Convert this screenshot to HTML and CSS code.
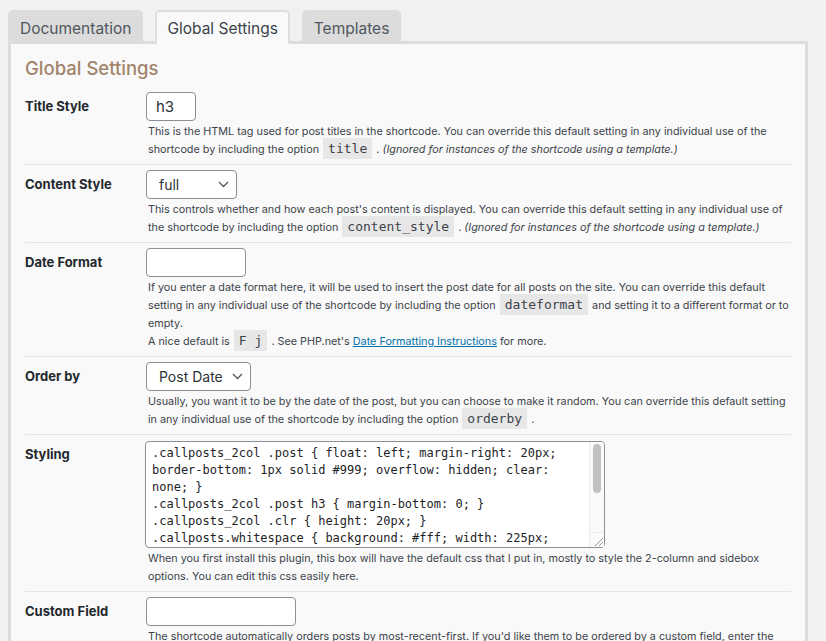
FILE: index.html
```html
<!DOCTYPE html>
<html>
<head>
<meta charset="utf-8">
<link rel="stylesheet" href="styles.css">
</head>
<body>
<div class="wrap">
  <div class="tabs">
    <div class="tab">Documentation</div>
    <div class="tab active">Global Settings</div>
    <div class="tab">Templates</div>
  </div>
  <div class="panel">
    <h2 class="title">Global Settings</h2>

    <div class="row">
      <div class="label">Title Style</div>
      <div class="field">
        <div class="input w-title">h3</div>
        <p class="desc">This is the HTML tag used for post titles in the shortcode. You can override this default setting in any individual use of the shortcode by including the option <code>title</code> . <em>(Ignored for instances of the shortcode using a template.)</em></p>
      </div>
    </div>

    <div class="row">
      <div class="label">Content Style</div>
      <div class="field">
        <div class="select w-content"><span>full</span><svg class="chev" width="11" height="7" viewBox="0 0 11 7"><path d="M1 1l4.5 4.5L10 1" fill="none" stroke="#50575e" stroke-width="1.3"/></svg></div>
        <p class="desc">This controls whether and how each post's content is displayed. You can override this default setting in any individual use of the shortcode by including the option <code>content_style</code> . <em>(Ignored for instances of the shortcode using a template.)</em></p>
      </div>
    </div>

    <div class="row">
      <div class="label">Date Format</div>
      <div class="field">
        <div class="input w-date"></div>
        <p class="desc">If you enter a date format here, it will be used to insert the post date for all posts on the site. You can override this default setting in any individual use of the shortcode by including the option <code>dateformat</code> and setting it to a different format or to empty.<br>A nice default is <code>F j</code> . See PHP.net's <a href="#">Date Formatting Instructions</a> for more.</p>
      </div>
    </div>

    <div class="row">
      <div class="label">Order by</div>
      <div class="field">
        <div class="select w-order"><span>Post Date</span><svg class="chev" width="11" height="7" viewBox="0 0 11 7"><path d="M1 1l4.5 4.5L10 1" fill="none" stroke="#50575e" stroke-width="1.3"/></svg></div>
        <p class="desc">Usually, you want it to be by the date of the post, but you can choose to make it random. You can override this default setting in any individual use of the shortcode by including the option <code>orderby</code> .</p>
      </div>
    </div>

    <div class="row">
      <div class="label">Styling</div>
      <div class="field">
        <div class="ta-wrap">
          <textarea class="code-area" spellcheck="false">.callposts_2col .post { float: left; margin-right: 20px; border-bottom: 1px solid #999; overflow: hidden; clear: none; }
.callposts_2col .post h3 { margin-bottom: 0; }
.callposts_2col .clr { height: 20px; }
.callposts.whitespace { background: #fff; width: 225px; padding: 10px; }
.callposts.whitespace .post { margin-bottom: 10px; }
.callposts.whitespace h3 { font-size: 14px; }
.callposts.sidebox { float: right; width: 200px; }
.callposts.sidebox .post { border-bottom: 1px dotted #ccc; }
.callposts .post-meta { color: #777; }</textarea>
          <div class="sbar"><div class="thumb"></div></div>
          <svg class="grip" width="14" height="14" viewBox="0 0 14 14"><path d="M13 5L5 13M13 9L9 13" stroke="#9a9a9a" stroke-width="1"/></svg>
        </div>
        <p class="desc">When you first install this plugin, this box will have the default css that I put in, mostly to style the 2-column and sidebox options. You can edit this css easily here.</p>
      </div>
    </div>

    <div class="row">
      <div class="label">Custom Field</div>
      <div class="field">
        <div class="input w-custom"></div>
        <p class="desc">The shortcode automatically orders posts by most-recent-first. If you'd like them to be ordered by a custom field, enter the name of that field here.</p>
      </div>
    </div>
  </div>
</div>
</body>
</html>
```

FILE: styles.css
```css
html, body {
  margin: 0;
  padding: 0;
  background: #f1f1f1;
}
body {
  padding: 10px 0 0 8px;
  font-family: Inter, "Noto Sans", sans-serif;
  color: #3c434a;
}
.wrap {
  width: 800px;
}
.tabs {
  display: flex;
  gap: 13px;
  position: relative;
  z-index: 1;
}
.tab {
  height: 31px;
  box-sizing: border-box;
  padding: 5px 12px 0;
  line-height: 27px;
  background: #dcdcdc;
  border-radius: 5px 5px 0 0;
  font-size: 15.5px;
  color: #50575e;
}
.active {
  background: #f9f9f9;
  border: 2px solid #dedede;
  border-bottom: none;
  height: 34px;
  padding: 3px 10px 0;
  margin-bottom: -3px;
  margin-left: -1px;
  margin-right: -1px;
  color: #3c434a;
}
.panel {
  border: 3px solid #dcdcdc;
  background: #f9f9f9;
  padding: 0 14px 20px;
}
.title {
  margin: 12px 0 7px;
  font-size: 18.5px;
  line-height: 24px;
  font-weight: 500;
  color: #a2846c;
}
.row {
  display: grid;
  grid-template-columns: 121px 1fr;
  padding: 5px 0 5px;
  border-bottom: 1px solid #e6e6e6;
}
.label {
  font-size: 13px;
  font-weight: 700;
  line-height: 29px;
  color: #23282d;
}
.input, .select {
  box-sizing: border-box;
  height: 29px;
  background: #fff;
  border: 1px solid #8c8f94;
  border-radius: 4px;
  line-height: 27px;
  color: #2c3338;
}
.input {
  padding: 0 9px;
  font-size: 15px;
}
.select {
  display: flex;
  align-items: center;
  justify-content: space-between;
  padding: 0 7px 0 12px;
  font-size: 14px;
}
.chev {
  display: block;
}
.w-title { width: 50px; }
.w-content { width: 91px; }
.w-date { width: 100px; }
.w-order { width: 105px; }
.w-custom { width: 150px; }
.desc {
  margin: 2px 0 0;
  padding-left: 2px;
  font-size: 10.8px;
  line-height: 18px;
  color: #3c434a;
}
.desc em {
  font-style: italic;
}
.desc a {
  color: #0073aa;
  text-decoration: underline;
}
code {
  font-family: "DejaVu Sans Mono", "Liberation Mono", monospace;
  font-size: 13px;
  line-height: 15px;
  background: #e7e7e7;
  padding: 3px 5px;
  margin: 0 1px;
  color: #3c434a;
}
.ta-wrap {
  position: relative;
  width: 460px;
  height: 107px;
  margin: 1px 0 0 -1px;
}
.code-area {
  display: block;
  box-sizing: border-box;
  width: 100%;
  height: 100%;
  margin: 0;
  padding: 3px 21px 3px 6px;
  border: 1px solid #8c8f94;
  border-radius: 4px;
  background: #fff;
  font-family: "DejaVu Sans Mono", "Liberation Mono", monospace;
  font-size: 12px;
  line-height: 17px;
  color: #1d2327;
  resize: none;
  overflow: hidden;
}
.sbar {
  position: absolute;
  top: 1px;
  right: 1px;
  bottom: 1px;
  width: 14px;
  background: #fafafa;
  border-left: 1px solid #ececec;
  border-radius: 0 3px 3px 0;
}
.thumb {
  position: absolute;
  top: 2px;
  left: 3px;
  width: 8px;
  height: 49px;
  background: #c1c1c1;
  border-radius: 4px;
}
.grip {
  position: absolute;
  right: 1px;
  bottom: 1px;
  border-top: 1px solid #ececec;
  background: #fafafa;
}
```
